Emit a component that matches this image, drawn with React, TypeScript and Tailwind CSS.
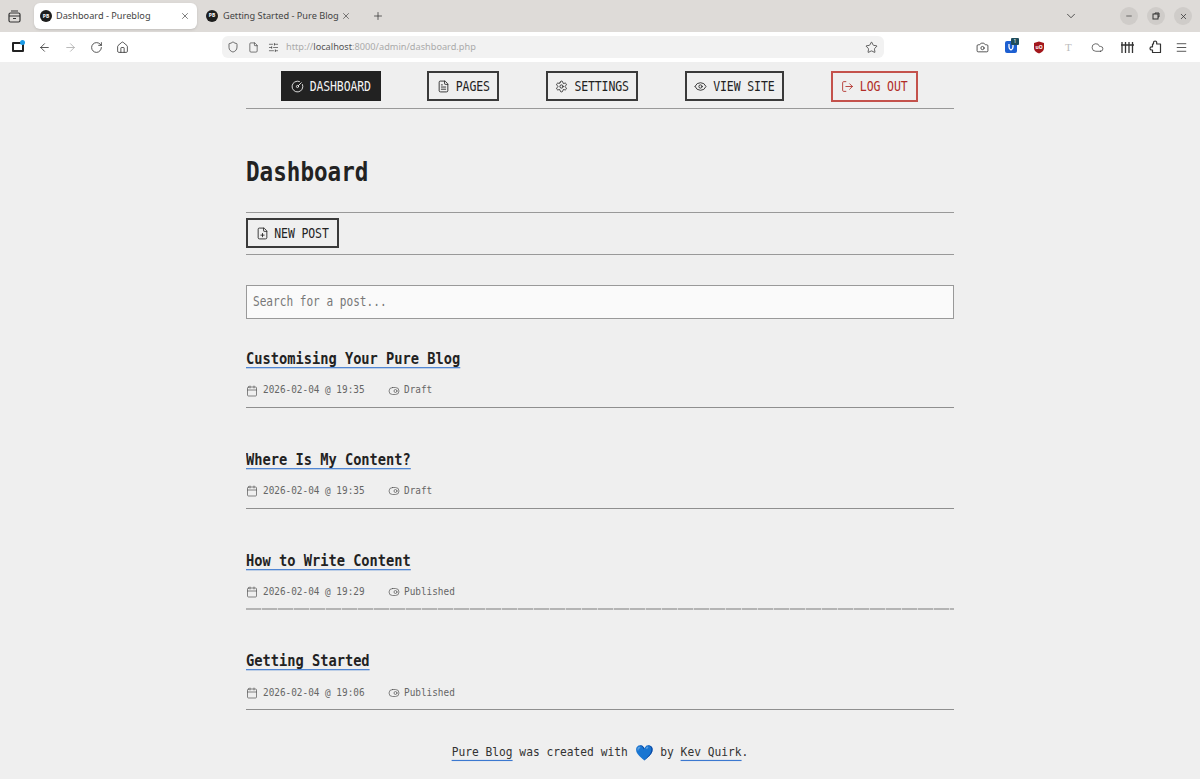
import React from "react";
import { ArrowLeft, ArrowRight, Calendar, Camera, ChevronDown, CircleGauge, Cloud, Eye, File, FilePlus, FileText, Home, LogOut, Menu, Minus, Plus, RotateCw, Settings, Shield, SlidersHorizontal, Star, ToggleRight, X } from "lucide-react";

const mono = "font-['DejaVu_Sans_Mono',monospace]";
const ui = "font-['Noto_Sans',sans-serif]";

function Favicon() {
  return (
    <span className="flex h-[12px] w-[12px] shrink-0 items-center justify-center rounded-full bg-[#1d1d1d] text-[5px] font-bold leading-none text-white">PB</span>
  );
}

function NavBtn({ icon, label, cls }: { icon: React.ReactNode; label: string; cls: string }) {
  return (
    <a className={`flex items-center justify-center gap-[6px] border-2 text-[11.5px] font-medium tracking-[-0.12px] ${cls}`}>
      {icon}
      <span className="mt-[2px] inline-block scale-y-[1.28]">{label}</span>
    </a>
  );
}

function Post({ title, time, status, rough }: { title: string; time: string; status: string; rough?: boolean }) {
  return (
    <article>
      <h2 className="h-[19px] text-[13.7px] font-bold leading-[19px] text-[#222]">
        <span className="inline-block scale-y-[1.15] underline decoration-[#3b78d0] decoration-[1px] underline-offset-[3px]">{title}</span>
      </h2>
      <div className="mt-[12.5px] flex h-[20px] items-center text-[9.4px] text-[#666]">
        <Calendar size={12} strokeWidth={1.4} className="text-[#555]" />
        <span className="ml-[5px] inline-block w-[125px] origin-left scale-y-[1.15]">{time}</span>
        <ToggleRight size={12} strokeWidth={1.4} className="text-[#555]" />
        <span className="ml-[4px] inline-block scale-y-[1.15]">{status}</span>
      </div>
      {rough ? (
        <div className="mt-[5.5px] h-[2px] bg-[repeating-linear-gradient(90deg,#b4b4b4_0,#b4b4b4_15px,#dcdcdc_15px,#dcdcdc_16px)]" />
      ) : (
        <div className="mt-[6.5px] h-[1px] bg-[#8f8f8f]" />
      )}
    </article>
  );
}

export default function App() {
  return (
    <div className={`h-[779px] w-[1200px] overflow-hidden bg-[#efefef] ${mono}`}>
      <div className={`flex h-[32px] items-center bg-[#dedbd8] text-[9.2px] text-[#333] ${ui}`}>
        <div className="ml-[1px] flex w-[27px] justify-center">
          <svg width="13" height="13" viewBox="0 0 13 13" fill="none" stroke="#333" strokeWidth="1.2"><rect x="1" y="3" width="11" height="9" rx="1.5" /><path d="M3 1h7M1 6h11M5 8.5h3" /></svg>
        </div>
        <div className="ml-[6px] flex h-[26px] w-[163px] items-center rounded-[6px] bg-white pl-[6px] pr-[7px] shadow-sm">
          <Favicon />
          <span className="ml-[4px] flex-1 whitespace-nowrap text-[#444]">Dashboard - Pureblog</span>
          <X size={10} strokeWidth={1.5} />
        </div>
        <div className="flex w-[166px] items-center pl-[9px] pr-[12px]">
          <Favicon />
          <span className="ml-[5px] flex-1 whitespace-nowrap text-[#444]">Getting Started - Pure Blog</span>
          <X size={10} strokeWidth={1.5} />
        </div>
        <Plus size={12} strokeWidth={1.5} className="ml-[9px]" />
        <div className="ml-auto flex items-center pr-[8px]">
          <ChevronDown size={14} strokeWidth={1.4} className="mr-[42px]" />
          <div className="mr-[9px] flex h-[18px] w-[18px] items-center justify-center rounded-full bg-[#cfccc9]"><Minus size={8} /></div>
          <div className="mr-[9px] flex h-[18px] w-[18px] items-center justify-center rounded-full bg-[#cfccc9]"><svg width="8" height="8" viewBox="0 0 8 8" fill="none" stroke="#333"><rect x="1" y="2" width="5" height="5" /><path d="M3 2V1h4v4H6" /></svg></div>
          <div className="flex h-[18px] w-[18px] items-center justify-center rounded-full bg-[#cfccc9]"><X size={9} /></div>
        </div>
      </div>
      <div className="flex h-[30px] items-center bg-white text-[#333]">
        <div className="relative ml-[12px] h-[10px] w-[12px] rounded-[1px] border-[2px] border-[#222]">
          <span className="absolute -right-[3px] -top-[4px] h-[5px] w-[5px] rounded-full bg-[#1c9be6]" />
        </div>
        <ArrowLeft size={13} strokeWidth={1.5} className="ml-[14px]" />
        <ArrowRight size={13} strokeWidth={1.5} className="ml-[13px] text-[#aaa]" />
        <RotateCw size={13} strokeWidth={1.5} className="ml-[13px]" />
        <Home size={13} strokeWidth={1.5} className="ml-[13px]" />
        <div className={`ml-[93px] flex h-[22px] w-[662px] items-center rounded-[6px] bg-[#f2f2f2] pl-[5px] pr-[6px] text-[9.2px] text-[#aaa] ${ui}`}>
          <Shield size={12} strokeWidth={1.4} className="text-[#333]" />
          <File size={11} strokeWidth={1.4} className="ml-[9px] text-[#333]" />
          <SlidersHorizontal size={11} strokeWidth={1.4} className="ml-[9px] text-[#333]" />
          <span className="ml-[7px]">http://<span className="text-[#555]">localhost</span>:8000/admin/dashboard.php</span>
          <Star size={13} strokeWidth={1.4} className="ml-auto text-[#333]" />
        </div>
        <Camera size={13} strokeWidth={1.5} className="ml-[92px]" />
        <div className="relative ml-[16px] flex h-[12px] w-[12px] items-center justify-center rounded-[2px] bg-[#1d5fd1]">
          <svg width="6" height="8" viewBox="0 0 6 8" fill="none" stroke="#fff" strokeWidth="1.3"><path d="M1 1v3c0 1.500 1 2.500 2 3 1-.5 2-1.500 2-3V1" /></svg>
          <span className={`absolute -right-[2px] -top-[3px] h-[7px] w-[8px] rounded-[1px] bg-[#1f4d5c] text-center text-[5px] leading-[7px] text-white ${ui}`}>1</span>
        </div>
        <div className="relative ml-[16px] flex h-[13px] w-[12px] items-center justify-center">
          <svg width="12" height="13" viewBox="0 0 12 13" className="absolute inset-0"><path d="M1 2l5-1.5L11 2v5c0 3-2.5 4.500-5 5.500C3.500 11.500 1 10 1 7z" fill="#a3171c" /></svg>
          <span className={`relative text-[5px] font-bold leading-none text-white ${ui}`}>uO</span>
        </div>
        <span className="ml-[20px] w-[8px] font-['Liberation_Serif',serif] text-[11px] text-[#bbb]">T</span>
        <Cloud size={13} strokeWidth={1.3} className="ml-[18px]" />
        <svg width="13" height="11" viewBox="0 0 13 11" stroke="#333" strokeWidth="1.300" className="ml-[17px]"><path d="M1 0v11M4.500 0v11M8 0v11M11.500 0v11M0 3h13" /></svg>
        <svg width="13" height="14" viewBox="0 0 13 14" fill="none" stroke="#333" strokeWidth="1.2" strokeLinejoin="round" className="ml-[15px]"><path d="M4.500 4V2.600a1.600 1.600 0 0 1 3.200 0V4H11.500v8.500H3.500V10H2.600a1.600 1.600 0 0 1 0-3.200H3.500V4z" /></svg>
        <Menu size={13} strokeWidth={1.5} className="ml-[13px]" />
      </div>

      <main className="mx-auto w-[708px]">
        <nav className="flex h-[47px] items-start gap-[46.8px] border-b border-[#999] pl-[35px] pt-[9px]">
          <NavBtn label="DASHBOARD" icon={<CircleGauge size={13} strokeWidth={1.6} />} cls="h-[30px] w-[99.5px] border-[#222] bg-[#222] text-[#f4f4f4]" />
          <NavBtn label="PAGES" icon={<FileText size={13} strokeWidth={1.6} />} cls="h-[30px] w-[72px] border-[#3a3a3a] text-[#222]" />
          <NavBtn label="SETTINGS" icon={<Settings size={13} strokeWidth={1.6} />} cls="h-[30px] w-[92px] border-[#3a3a3a] text-[#222]" />
          <NavBtn label="VIEW SITE" icon={<Eye size={13} strokeWidth={1.6} />} cls="h-[30px] w-[99px] border-[#3a3a3a] text-[#222]" />
          <NavBtn label="LOG OUT" icon={<LogOut size={13} strokeWidth={1.6} />} cls="h-[31px] w-[87px] border-[#c4524c] pb-[1px] text-[#b12d27]" />
        </nav>
        <h1 className="mt-[45px] h-[36px] text-[22.6px] font-bold leading-[36px] text-[#222]">
          <span className="inline-block scale-y-[1.15]">Dashboard</span>
        </h1>
        <div className="mt-[22px] border-y border-[#999] pb-[6px] pt-[5px]">
          <a className="flex h-[30px] w-[93px] items-center justify-center gap-[5px] border-2 border-[#3a3a3a] text-[11.5px] font-medium tracking-[-0.12px] text-[#222]">
            <FilePlus size={13} strokeWidth={1.6} />
            <span className="mt-[2px] inline-block scale-y-[1.28]">NEW POST</span>
          </a>
        </div>
        <div className="mt-[30px] flex h-[34px] w-full items-center border border-[#999] bg-[#fafafa] px-[6px] text-[11.1px] text-[#777]">
          <span className="inline-block scale-y-[1.2]">Search for a post...</span>
        </div>
        <div className="mt-[30px] flex flex-col gap-[41.75px]">
          <Post title="Customising Your Pure Blog" time="2026-02-04 @ 19:35" status="Draft" />
          <Post title="Where Is My Content?" time="2026-02-04 @ 19:35" status="Draft" />
          <Post title="How to Write Content" time="2026-02-04 @ 19:29" status="Published" rough />
          <Post title="Getting Started" time="2026-02-04 @ 19:06" status="Published" />
        </div>
        <footer className="mt-[33px] flex h-[20px] items-center justify-center text-[11.25px] leading-[20px] text-[#333]">
          <a className="inline-block scale-y-[1.15] underline decoration-[#3b78d0] decoration-[1px] underline-offset-[3px]">Pure Blog</a>
          <span className="inline-block scale-y-[1.15] whitespace-pre"> was created with </span>
          <span className="text-[15px] leading-none text-[#1f6fd0]">💙</span>
          <span className="inline-block scale-y-[1.15] whitespace-pre"> by </span>
          <a className="inline-block scale-y-[1.15] underline decoration-[#3b78d0] decoration-[1px] underline-offset-[3px]">Kev Quirk</a>
          <span className="inline-block scale-y-[1.15]">.</span>
        </footer>
      </main>
    </div>
  );
}
